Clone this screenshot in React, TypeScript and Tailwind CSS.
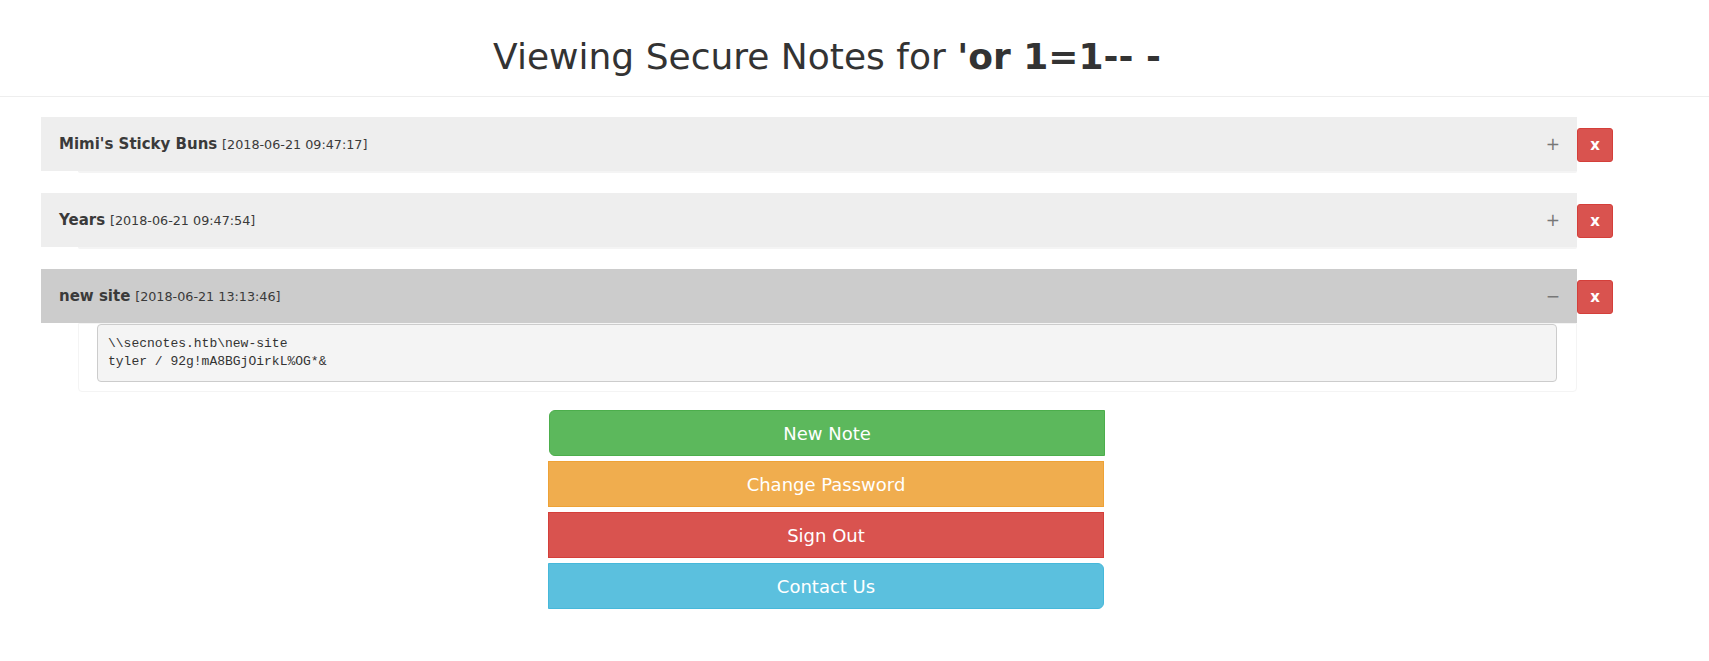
import { useState } from "react"

interface Note {
  id: number
  title: string
  date: string
  body: string
}

const notes: Note[] = [
  { id: 1, title: "Mimi's Sticky Buns", date: "2018-06-21 09:47:17", body: "" },
  { id: 2, title: "Years", date: "2018-06-21 09:47:54", body: "" },
  { id: 3, title: "new site", date: "2018-06-21 13:13:46", body: "\\\\secnotes.htb\\new-site\ntyler / 92g!mA8BGjOirkL%OG*&" }
]

function NoteRow({ note, open, onToggle }: { note: Note; open: boolean; onToggle: () => void }) {
  return (
    <div className="flex mb-[20px]">
      <div className="flex-1">
        <div
          onClick={onToggle}
          className={
            "h-[54px] flex items-center justify-between pl-[18px] pr-[17px] cursor-pointer text-[#3a3a3a] " +
            (open ? "bg-[#cccccc]" : "bg-[#eeeeee]")
          }
        >
          <div className="text-[15px]">
            <span className="font-bold">{note.title}</span>{" "}
            <span className="text-[12.75px]">[{note.date}]</span>
          </div>
          <span className="text-[#777] text-[17px] leading-none">{open ? "\u2212" : "+"}</span>
        </div>
        <div className="ml-[37px] border border-[#f4f4f4] rounded-b-[4px]">
          {open && (
            <pre className="ml-[18px] mr-[19px] mb-[9px] bg-[#f4f4f4] border border-[#cccccc] rounded-[4px] px-[10px] py-[10px] text-[13px] leading-[18px] text-[#333] font-['Liberation_Mono',monospace]">
              {note.body}
            </pre>
          )}
        </div>
      </div>
      <button className="mt-[11px] self-start w-[36px] h-[34px] bg-[#d9534f] border border-[#d43f3a] rounded-[3px] text-white font-bold text-[15px] leading-none">
        x
      </button>
    </div>
  )
}

export default function App() {
  const [openId, setOpenId] = useState<number | null>(3)

  return (
    <div className="min-h-screen bg-white font-['DejaVu_Sans',sans-serif] text-[#333]">
      <div className="h-[97px] border-b border-[#eeeeee] pt-[37px] pl-[41px] pr-[96px]">
        <h1 className="text-center text-[36px] leading-[40px] font-normal">
          Viewing Secure Notes for <span className="font-bold">'or 1=1-- -</span>
        </h1>
      </div>

      <div className="pl-[41px] pr-[96px] pt-[20px]">
        {notes.map(n => (
          <NoteRow
            key={n.id}
            note={n}
            open={openId === n.id}
            onToggle={() => setOpenId(openId === n.id ? null : n.id)}
          />
        ))}

        <div className="flex flex-col items-center gap-[5px] -mt-[2px] pr-[2px]">
          <button className="w-[556px] h-[46px] bg-[#5cb85c] border border-[#4cae4c] rounded-l-[6px] text-white text-[18px] translate-x-[1px]">
            New Note
          </button>
          <button className="w-[556px] h-[46px] bg-[#f0ad4e] border border-[#eea236] text-white text-[18px]">
            Change Password
          </button>
          <button className="w-[556px] h-[46px] bg-[#d9534f] border border-[#d43f3a] text-white text-[18px]">
            Sign Out
          </button>
          <button className="w-[556px] h-[46px] bg-[#5bc0de] border border-[#46b8da] rounded-r-[6px] text-white text-[18px]">
            Contact Us
          </button>
        </div>
      </div>
    </div>
  )
}
